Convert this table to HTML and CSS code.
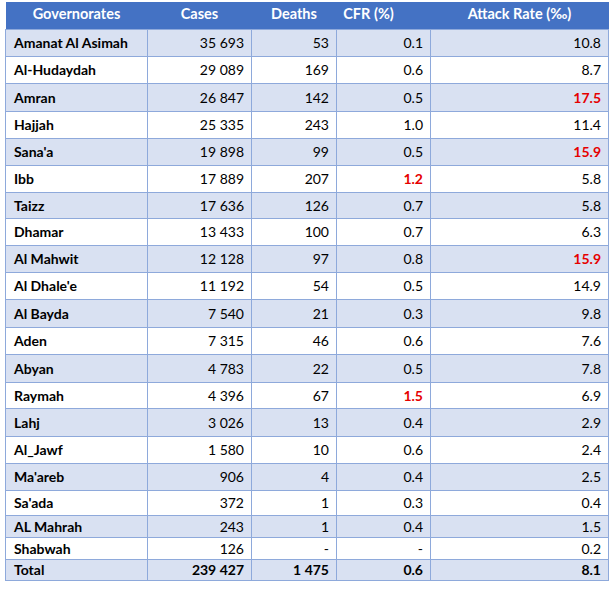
FILE: index.html
```html
<!DOCTYPE html>
<html>
<head>
<meta charset="utf-8">
<link rel="stylesheet" href="styles.css">
</head>
<body>
<table class="tbl">
  <colgroup>
    <col class="c1"><col class="c2"><col class="c3"><col class="c4"><col class="c5">
  </colgroup>
  <thead>
    <tr class="head">
      <th>Governorates</th><th>Cases</th><th>Deaths</th><th class="cfr-h">CFR (%)</th><th>Attack Rate (‰)</th>
    </tr>
  </thead>
  <tbody>
    <tr class="alt"><td>Amanat Al Asimah</td><td>35 693</td><td>53</td><td>0.1</td><td>10.8</td></tr>
    <tr><td>Al-Hudaydah</td><td>29 089</td><td>169</td><td>0.6</td><td>8.7</td></tr>
    <tr class="alt tall"><td>Amran</td><td>26 847</td><td>142</td><td>0.5</td><td class="red">17.5</td></tr>
    <tr><td>Hajjah</td><td>25 335</td><td>243</td><td>1.0</td><td>11.4</td></tr>
    <tr class="alt"><td>Sana'a</td><td>19 898</td><td>99</td><td>0.5</td><td class="red">15.9</td></tr>
    <tr><td>Ibb</td><td>17 889</td><td>207</td><td class="red">1.2</td><td>5.8</td></tr>
    <tr class="alt short"><td>Taizz</td><td>17 636</td><td>126</td><td>0.7</td><td>5.8</td></tr>
    <tr><td>Dhamar</td><td>13 433</td><td>100</td><td>0.7</td><td>6.3</td></tr>
    <tr class="alt"><td>Al Mahwit</td><td>12 128</td><td>97</td><td>0.8</td><td class="red">15.9</td></tr>
    <tr><td>Al Dhale'e</td><td>11 192</td><td>54</td><td>0.5</td><td>14.9</td></tr>
    <tr class="alt tall"><td>Al Bayda</td><td>7 540</td><td>21</td><td>0.3</td><td>9.8</td></tr>
    <tr><td>Aden</td><td>7 315</td><td>46</td><td>0.6</td><td>7.6</td></tr>
    <tr class="alt tall"><td>Abyan</td><td>4 783</td><td>22</td><td>0.5</td><td>7.8</td></tr>
    <tr class="short"><td>Raymah</td><td>4 396</td><td>67</td><td class="red">1.5</td><td>6.9</td></tr>
    <tr class="alt tall"><td>Lahj</td><td>3 026</td><td>13</td><td>0.4</td><td>2.9</td></tr>
    <tr><td>Al_Jawf</td><td>1 580</td><td>10</td><td>0.6</td><td>2.4</td></tr>
    <tr class="alt"><td>Ma'areb</td><td>906</td><td>4</td><td>0.4</td><td>2.5</td></tr>
    <tr class="r25"><td>Sa'ada</td><td>372</td><td>1</td><td>0.3</td><td>0.4</td></tr>
    <tr class="alt r22"><td>AL Mahrah</td><td>243</td><td>1</td><td>0.4</td><td>1.5</td></tr>
    <tr class="r22"><td>Shabwah</td><td>126</td><td>-</td><td>-</td><td>0.2</td></tr>
    <tr class="alt total r21"><td>Total</td><td>239 427</td><td>1 475</td><td>0.6</td><td>8.1</td></tr>
  </tbody>
</table>
</body>
</html>
```

FILE: styles.css
```css
html, body {
  margin: 0;
  padding: 0;
  background: #ffffff;
}
body {
  padding: 2px 0 0 5px;
  font-family: Lato, "Liberation Sans", sans-serif;
  font-size: 14px;
  color: #000;
}
.tbl {
  border-collapse: collapse;
  table-layout: fixed;
  width: 603px;
}
.c1 { width: 142px; }
.c2 { width: 104px; }
.c3 { width: 85px; }
.c4 { width: 94px; }
.c5 { width: 178px; }
.tbl th {
  background: #4472c4;
  color: #ffffff;
  font-weight: 700;
  font-size: 14.5px;
  text-align: center;
  height: 27px;
  padding: 0 0 4px 0;
  border: none;
  vertical-align: middle;
  box-sizing: border-box;
}
.tbl th.cfr-h {
  padding-right: 30px;
}
.tbl td {
  border: 1px solid #8ea9db;
  height: 27px;
  padding: 0 7px 0 8px;
  text-align: right;
  vertical-align: middle;
  box-sizing: border-box;
}
.tbl td:first-child {
  text-align: left;
  font-weight: 700;
}
.tbl tr.alt td { background: #d9e1f2; }
.tbl tr.tall td { height: 28px; }
.tbl tr.short td { height: 26px; }
.tbl tr.r25 td { height: 25px; }
.tbl tr.r22 td { height: 22px; }
.tbl tr.r21 td { height: 21px; }
.tbl td.red {
  color: #e60000;
  font-weight: 700;
}
.tbl tr.total td { font-weight: 700; }
```
